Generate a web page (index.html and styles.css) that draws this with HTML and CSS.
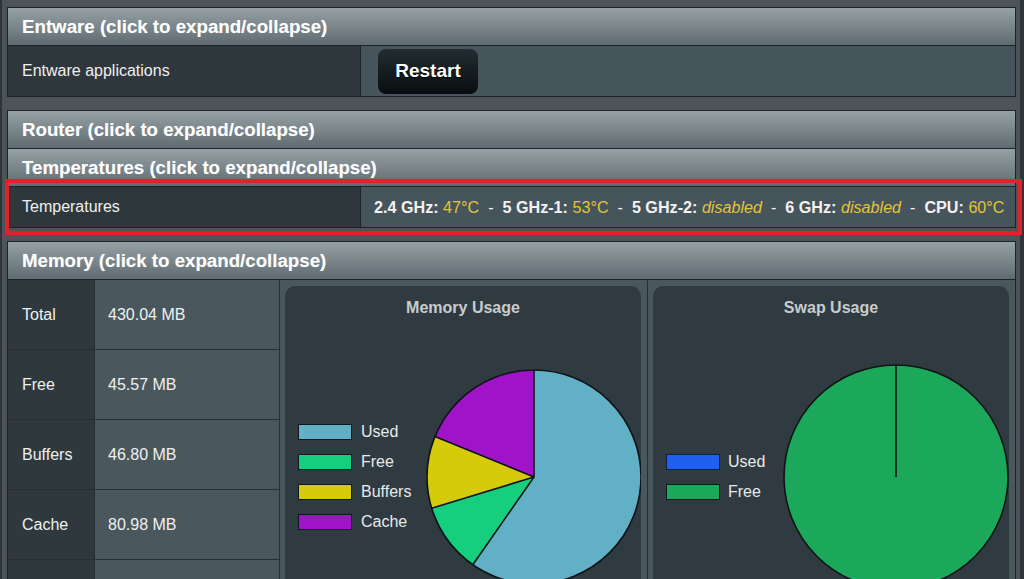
FILE: index.html
```html
<!DOCTYPE html>
<html lang="en">
<head>
<meta charset="utf-8">
<title>Router status</title>
<link rel="stylesheet" href="styles.css">
</head>
<body>
<div class="page">
  <section class="panel">
    <div class="panel-head">Entware (click to expand/collapse)</div>
    <div class="row row-tall">
      <div class="label">Entware applications</div>
      <div class="value value-btn"><button class="btn" type="button">Restart</button></div>
    </div>
  </section>

  <section class="panel panel-joined">
    <div class="panel-head">Router (click to expand/collapse)</div>
  </section>

  <section class="panel panel-notop">
    <div class="panel-head">Temperatures (click to expand/collapse)</div>
    <div class="row row-short">
      <div class="label">Temperatures</div>
      <div class="value temps">
        <b>2.4 GHz:</b>&nbsp;<span class="hl">47°C</span>&nbsp; - &nbsp;<b>5 GHz-1:</b>&nbsp;<span class="hl">53°C</span>&nbsp; - &nbsp;<b>5 GHz-2:</b>&nbsp;<i class="hl">disabled</i>&nbsp; - &nbsp;<b>6 GHz:</b>&nbsp;<i class="hl">disabled</i>&nbsp; - &nbsp;<b>CPU:</b>&nbsp;<span class="hl">60°C</span>
      </div>
      <div class="callout"></div>
    </div>
  </section>

  <section class="panel">
    <div class="panel-head">Memory (click to expand/collapse)</div>
    <div class="mem-grid">
      <div class="m-label">Total</div><div class="m-value">430.04 MB</div>
      <div class="chart-cell chart-cell-1">
        <div class="chart-box">
          <div class="chart-title">Memory Usage</div>
          <div class="chart-body">
            <div class="legend legend-mem">
              <div class="lg-item"><span class="sw sw-used"></span>Used</div>
              <div class="lg-item"><span class="sw sw-free"></span>Free</div>
              <div class="lg-item"><span class="sw sw-buf"></span>Buffers</div>
              <div class="lg-item"><span class="sw sw-cache"></span>Cache</div>
            </div>
            <svg class="pie pie-mem" width="216" height="216" viewBox="0 0 216 216">
              <path d="M108,108 L108,1 A107,107 0 1,1 46.81,195.78 Z" fill="#62b0c5"/>
              <path d="M108,108 L46.81,195.78 A107,107 0 0,1 5.65,139.22 Z" fill="#15cf7f"/>
              <path d="M108,108 L5.65,139.22 A107,107 0 0,1 8.93,67.55 Z" fill="#d5cb0b"/>
              <path d="M108,108 L8.93,67.55 A107,107 0 0,1 108,1 Z" fill="#a013c9"/>
              <g fill="none" stroke="#0d1416" stroke-width="1.6">
                <circle cx="108" cy="108" r="107"/>
                <path d="M108,1 L108,108 L46.81,195.78 M108,108 L5.65,139.22 M108,108 L8.93,67.55"/>
              </g>
            </svg>
          </div>
        </div>
      </div>
      <div class="chart-cell chart-cell-2">
        <div class="chart-box">
          <div class="chart-title">Swap Usage</div>
          <div class="chart-body">
            <div class="legend legend-swap">
              <div class="lg-item"><span class="sw sw-sused"></span>Used</div>
              <div class="lg-item"><span class="sw sw-sfree"></span>Free</div>
            </div>
            <svg class="pie pie-swap" width="226" height="226" viewBox="0 0 226 226">
              <circle cx="113" cy="113" r="112" fill="#1ca85a" stroke="#0d1416" stroke-width="1.6"/>
              <path d="M113,1 L113,113" stroke="#0d1416" stroke-width="1.6"/>
            </svg>
          </div>
        </div>
      </div>
      <div class="m-label">Free</div><div class="m-value">45.57 MB</div>
      <div class="m-label">Buffers</div><div class="m-value">46.80 MB</div>
      <div class="m-label">Cache</div><div class="m-value">80.98 MB</div>
      <div class="m-label"></div><div class="m-value"></div>
    </div>
  </section>
</div>
</body>
</html>
```

FILE: styles.css
```css
html, body {
  margin: 0;
  height: 100%;
  overflow: hidden;
}

body {
  background: #2e3438;
  font-family: "Liberation Sans", Arial, sans-serif;
  color: #eef0f0;
}

.page {
  margin-left: 2px;
  width: 1018px;
  min-height: 100%;
  box-sizing: border-box;
  padding: 7px 4px 0 5px;
  background: #4c5457;
}

.panel {
  border: 1px solid #1d2427;
  margin-bottom: 13px;
  background: #46555b;
}

.panel-joined {
  margin-bottom: 0;
}

.panel-notop {
  border-top: none;
}

.panel-head {
  height: 37px;
  display: flex;
  align-items: center;
  padding-left: 14px;
  background: linear-gradient(#96a1a5, #5f6b70);
  color: #ffffff;
  font-weight: bold;
  font-size: 18.7px;
  text-shadow: 0 0 1px rgba(255, 255, 255, 0.3);
}

.row {
  position: relative;
  display: flex;
  border-top: 1px solid #1d2427;
}

.row-tall {
  height: 50px;
}

.row-short {
  height: 40px;
}

.label {
  flex: 0 0 353px;
  box-sizing: border-box;
  display: flex;
  align-items: center;
  padding-left: 14px;
  background: #2e383c;
  border-right: 1px solid #1d2427;
  font-size: 16px;
  color: #eef0f0;
}

.value {
  flex: 1;
  display: flex;
  align-items: center;
  background: #46555b;
  font-size: 16px;
}

.value-btn {
  padding-left: 17px;
}

.btn {
  width: 100px;
  height: 45px;
  border: none;
  border-radius: 8px;
  background: linear-gradient(#232d31, #090d0f);
  color: #ffffff;
  font-family: "Liberation Sans", Arial, sans-serif;
  font-weight: bold;
  font-size: 19px;
  text-shadow: 0 1px 1px #000;
  padding: 0;
}

.temps {
  padding-left: 13px;
  white-space: nowrap;
  color: #f2f2f2;
  font-size: 16.15px;
}

.temps b {
  font-weight: bold;
}

.hl {
  color: #e3c43a;
}

.callout {
  position: absolute;
  left: -3px;
  top: -8px;
  right: -7px;
  bottom: -8px;
  border: 4px solid #e2222b;
  pointer-events: none;
}

.mem-grid {
  display: grid;
  grid-template-columns: 86px 184px 1fr 1fr;
  grid-auto-rows: 69px;
  gap: 1px;
  background: #283034;
  border-top: 1px solid #1d2427;
}

.m-label {
  display: flex;
  align-items: center;
  padding-left: 14px;
  background: #2f393d;
  font-size: 16px;
}

.m-value {
  display: flex;
  align-items: center;
  padding-left: 13px;
  background: #4a585e;
  font-size: 16px;
}

.chart-cell {
  grid-row: 1 / span 5;
  background: #4a585e;
  padding: 6px 6px 0 5px;
  overflow: hidden;
}

.chart-cell-1 {
  grid-column: 3;
}

.chart-cell-2 {
  grid-column: 4;
}

.chart-box {
  height: 360px;
  background: #2f3b41;
  border-radius: 10px;
  overflow: hidden;
}

.chart-title {
  padding-top: 12px;
  height: 20px;
  line-height: 20px;
  text-align: center;
  font-weight: bold;
  font-size: 16px;
  color: #c9cbcc;
}

.chart-body {
  height: 318px;
  display: flex;
  align-items: center;
}

.legend {
  box-sizing: border-box;
  padding-left: 13px;
  display: flex;
  flex-direction: column;
  gap: 10px;
}

.legend-mem {
  flex: 0 0 141px;
}

.legend-swap {
  flex: 0 0 130px;
}

.lg-item {
  display: flex;
  align-items: center;
  gap: 9px;
  height: 20px;
  font-size: 16px;
  color: #e8eaea;
}

.legend-swap .lg-item {
  gap: 8px;
}

.sw {
  flex: 0 0 auto;
  width: 52px;
  height: 14px;
  border: 1px solid #0c1a1e;
}

.sw-used { background: #62b0c5; }
.sw-free { background: #15cf7f; }
.sw-buf { background: #d5cb0b; }
.sw-cache { background: #a013c9; }
.sw-sused { background: #1f60f0; border-color: #0b1f4d; }
.sw-sfree { background: #1ca85a; }

.pie {
  flex: 0 0 auto;
  display: block;
}
```
